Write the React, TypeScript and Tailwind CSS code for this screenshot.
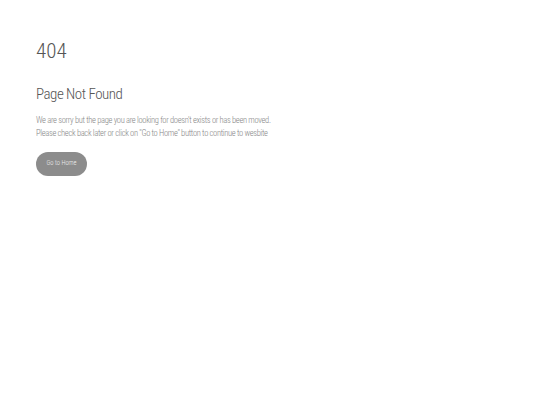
export default function App() {
	return (
		<div className="min-h-[405px] w-full bg-white" style={{ fontFamily: "'Roboto Condensed', Roboto, sans-serif" }}>
			<div className="px-9 pt-[38px]">
				<h1 className="text-[21px] leading-[26px] font-light text-[#555555]">404</h1>
				<h2 className="mt-[20px] text-[15px] leading-[20px] font-light text-[#555555] tracking-[-0.5px]">Page Not Found</h2>
				<div className="mt-[10px] text-[8.5px] leading-[13px] font-light text-[#858585] tracking-[-0.33px]">
					<p>We are sorry but the page you are looking for doesn't exists or has been moved.</p>
					<p>Please check back later or click on "Go to Home" button to continue to wesbite</p>
				</div>
				<button className="mt-[12px] h-6 w-[51px] rounded-full bg-[#8c8c8c] text-[6.5px] font-light text-[#eeeeee]">
					Go to Home
				</button>
			</div>
		</div>
	);
}
